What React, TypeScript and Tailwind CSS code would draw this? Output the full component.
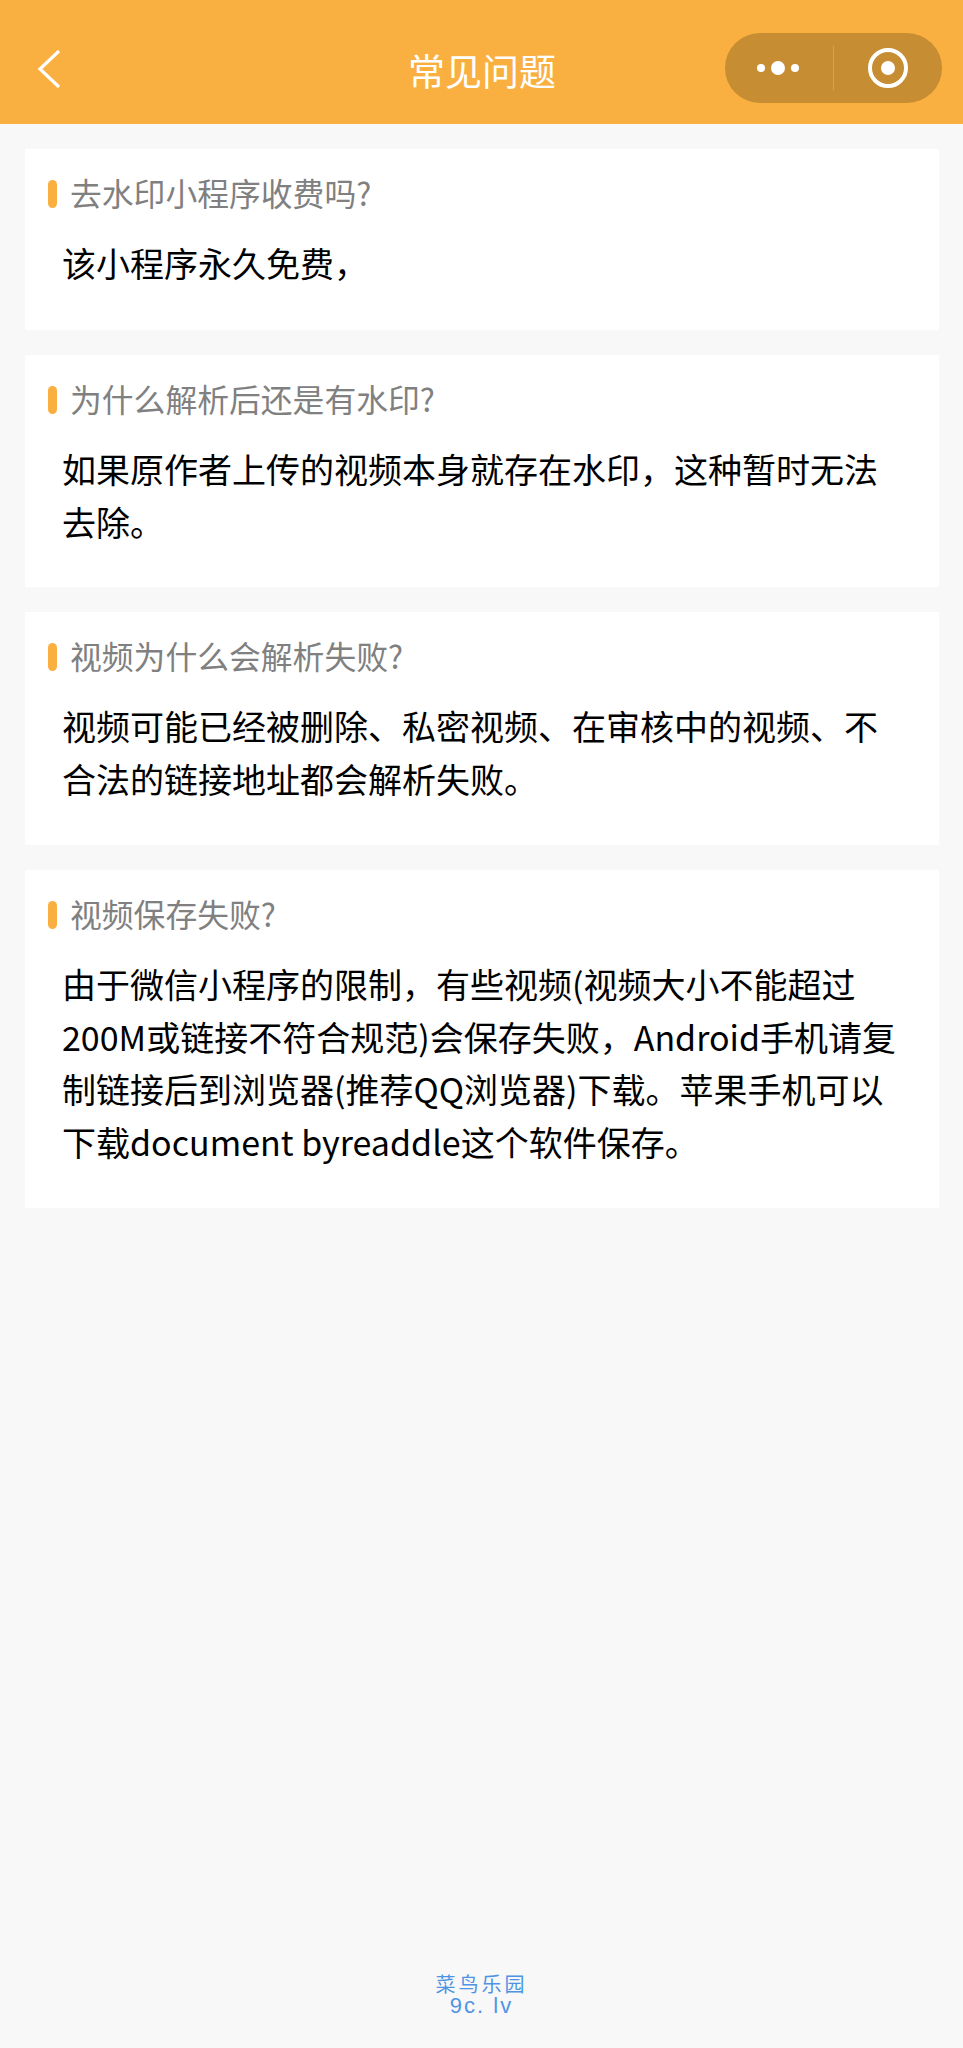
const faqs = [
  {
    q: "去水印小程序收费吗?",
    a: ["该小程序永久免费\uFF0C"],
    h: "h-[181px] bg-white pt-[24px]",
  },
  {
    q: "为什么解析后还是有水印?",
    a: ["如果原作者上传的视频本身就存在水印\uFF0C这种暂时无法", "去除。"],
    h: "h-[232px] bg-white pt-[24px]",
  },
  {
    q: "视频为什么会解析失败?",
    a: ["视频可能已经被删除、私密视频、在审核中的视频、不", "合法的链接地址都会解析失败。"],
    h: "h-[233px] bg-white pt-[24px]",
  },
  {
    q: "视频保存失败?",
    a: [
      "由于微信小程序的限制\uFF0C有些视频(视频大小不能超过",
      "200M或链接不符合规范)会保存失败\uFF0CAndroid手机请复",
      "制链接后到浏览器(推荐QQ浏览器)下载。苹果手机可以",
      "下载document byreaddle这个软件保存。",
    ],
    h: "h-[338px] bg-white pt-[24px]",
  },
];

function Header() {
  return (
    <header className="relative flex h-[124px] shrink-0 items-center justify-between bg-[#fab041] pl-[36px] pr-[21px]">
      <svg width="26" height="40" viewBox="0 0 26 40" fill="none" className="mt-[14px]">
        <path d="M23 2 L4 20 L23 38" stroke="#fff" strokeWidth="3.2" strokeLinejoin="miter" />
      </svg>
      <h1 className="absolute left-[408px] top-[48px] text-[37px] leading-[44px] font-normal text-white">
        常见问题
      </h1>
      <div className="mt-[12px] flex h-[70px] w-[217px] items-center rounded-full bg-[#c68d32]">
        <div className="flex w-[108px] items-center justify-end gap-[6px] pr-[34px]">
          <span className="size-[8px] rounded-full bg-white" />
          <span className="size-[14px] rounded-full bg-white" />
          <span className="size-[8px] rounded-full bg-white" />
        </div>
        <div className="h-[44px] w-px bg-[#d9a350]" />
        <div className="flex flex-1 justify-center">
          <div className="flex size-[40px] items-center justify-center rounded-full border-[4.5px] border-white">
            <span className="size-[14px] rounded-full bg-white" />
          </div>
        </div>
      </div>
    </header>
  );
}

export default function App() {
  return (
    <div className="flex min-h-[2048px] flex-col bg-[#f8f8f8] font-['Noto_Sans_CJK_SC','Noto_Sans',sans-serif]">
      <Header />
      <main className="flex flex-col gap-[25px] pl-[25px] pr-[24px] pt-[25px]">
        {faqs.map((item) => (
          <section key={item.q} className={item.h}>
            <div className="flex items-center gap-[13px] pl-[23px]">
              <span className="mt-[2px] h-[28px] w-[9px] rounded-full bg-[#fab041]" />
              <h2 className="text-[31.8px] leading-[39px] font-normal text-[#808080]">{item.q}</h2>
            </div>
            <div className="mt-[25px] pl-[37px] text-[34px] leading-[52.5px] whitespace-nowrap text-black">
              {item.a.map((line) => (
                <p key={line}>{line}</p>
              ))}
            </div>
          </section>
        ))}
      </main>
      <footer className="mt-auto pb-[31px] text-center text-[#4f94e4]">
        <p className="text-[20px] leading-[22px] tracking-[3px]">菜鸟乐园</p>
        <p className="font-['Liberation_Sans',sans-serif] text-[22px] leading-[22px] tracking-[2px]">9c. lv</p>
      </footer>
    </div>
  );
}
